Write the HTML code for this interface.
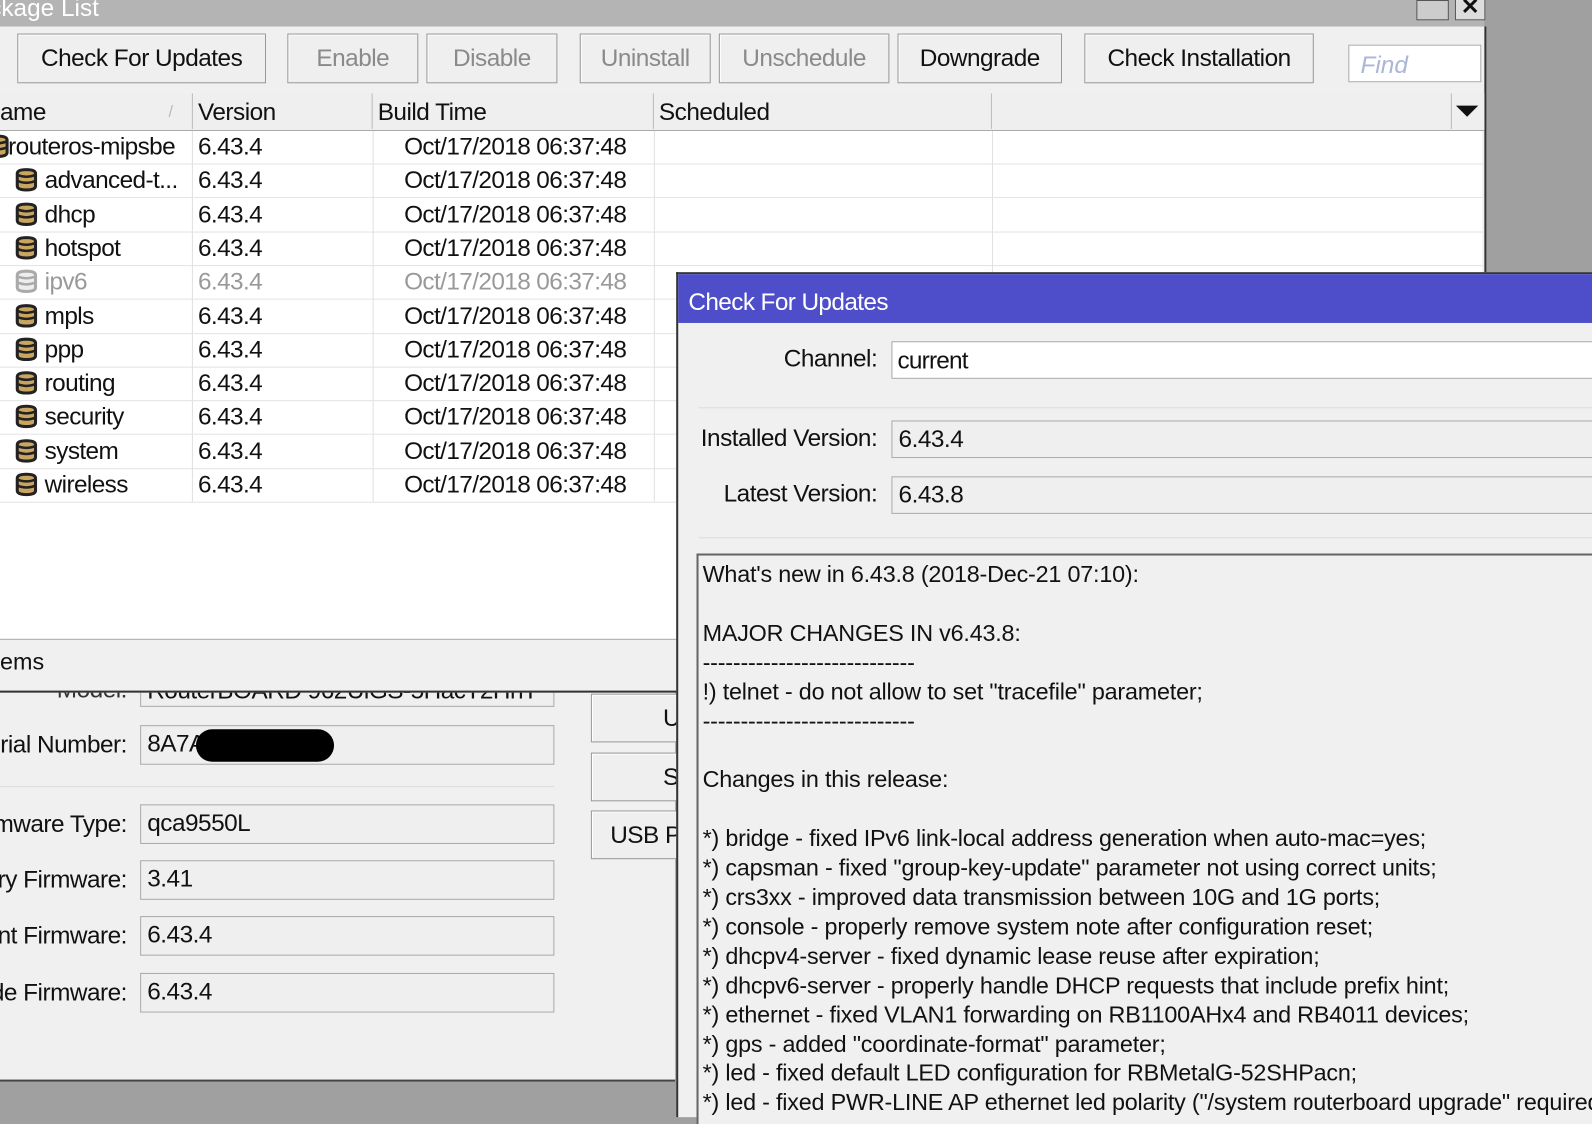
<!DOCTYPE html>
<html><head><meta charset="utf-8"><style>
html,body{margin:0;padding:0;width:1592px;height:1105px;overflow:hidden;background:#a0a0a0;}
#w{position:absolute;left:0;top:0;width:1568px;height:1088px;transform:scale(1.0153,1.0156);transform-origin:0 0;font-family:"Liberation Sans",sans-serif;color:#111;}
.a{position:absolute;}
.btn{position:absolute;top:33px;height:47px;border:1px solid #999;background:#efefef;box-shadow:inset 1px 1px 0 #fff;font-size:24px;line-height:47px;text-align:center;letter-spacing:-0.5px;white-space:nowrap;}
.dis{color:#8a8a8a;}
.hd{position:absolute;top:92px;height:35px;border-right:1px solid #bbb;font-size:24px;line-height:38px;padding-left:5px;box-sizing:border-box;letter-spacing:-0.5px;}
.row{position:absolute;left:0;width:1462px;height:33px;border-bottom:1px solid #e3e3e3;font-size:24px;line-height:34px;letter-spacing:-0.6px;}
.row span{position:absolute;top:0;white-space:nowrap;}
.fld{position:absolute;border:1px solid #aaa;background:#efefef;font-size:24px;line-height:36px;padding-left:6px;box-sizing:border-box;letter-spacing:-0.5px;white-space:nowrap;overflow:hidden;}
.lbl{position:absolute;font-size:24px;text-align:right;letter-spacing:-0.5px;white-space:nowrap;}
.ll{left:-200px;width:325px;}
.txt{font-size:23px;line-height:28.9px;letter-spacing:-0.2px;white-space:pre;}
</style></head><body><div id="w">
<div class="a" style="left:0;top:680px;width:665px;height:383px;background:#f0f0f0;border-bottom:2px solid #444"></div>
<div class="lbl ll" style="top:665px;line-height:30px;color:#333">Model:</div>
<div class="fld" style="left:138px;top:670px;width:408px;height:26px;line-height:20px">RouterBOARD 962UiGS-5HacT2HnT</div>
<div class="lbl ll" style="top:720px">Serial Number:</div>
<div class="fld" style="left:138px;top:714px;width:408px;height:39px">8A7A</div>
<div class="a" style="left:193px;top:718px;width:136px;height:32px;border-radius:16px;background:#000"></div>
<div class="a" style="left:0;top:774px;width:546px;height:1px;background:#ddd"></div>
<div class="lbl ll" style="top:798px">Firmware Type:</div>
<div class="fld" style="left:138px;top:792px;width:408px;height:39px">qca9550L</div>
<div class="lbl ll" style="top:853px">Factory Firmware:</div>
<div class="fld" style="left:138px;top:847px;width:408px;height:39px">3.41</div>
<div class="lbl ll" style="top:908px">Current Firmware:</div>
<div class="fld" style="left:138px;top:902px;width:408px;height:39px">6.43.4</div>
<div class="lbl ll" style="top:964px">Upgrade Firmware:</div>
<div class="fld" style="left:138px;top:958px;width:408px;height:39px">6.43.4</div>
<div class="btn" style="left:582px;top:683px;width:90px;height:48px;text-align:left;padding-left:70px;box-sizing:border-box">U</div>
<div class="btn" style="left:582px;top:741px;width:90px;height:48px;text-align:left;padding-left:70px;box-sizing:border-box">S</div>
<div class="btn" style="left:582px;top:798px;width:90px;height:48px;text-align:left;padding-left:18px;box-sizing:border-box">USB P</div>

<div class="a" style="left:-40px;top:0;width:1502px;height:26px;background:#b4b4b4;color:#fff;font-size:24px;line-height:18px">Package List</div>
<div class="a" style="left:1395px;top:0;width:30px;height:18px;border:1px solid #555;background:#ccc"></div>
<div class="a" style="left:1433px;top:-2px;width:28px;height:20px;border:1px solid #555;background:#ddd;font-size:22px;line-height:16px;text-align:center;font-weight:bold">✕</div>
<div class="a" style="left:0;top:26px;width:1462px;height:654px;background:#f0f0f0;border-right:2px solid #333;border-bottom:2px solid #333"></div>
<div class="btn" style="left:17px;width:243px">Check For Updates</div>
<div class="btn dis" style="left:283px;width:127px">Enable</div>
<div class="btn dis" style="left:420px;width:127px">Disable</div>
<div class="btn dis" style="left:571px;width:127px">Uninstall</div>
<div class="btn dis" style="left:708px;width:166px">Unschedule</div>
<div class="btn" style="left:884px;width:160px">Downgrade</div>
<div class="btn" style="left:1068px;width:224px">Check Installation</div>
<div class="a" style="left:1328px;top:44px;width:131px;height:37px;border:1px solid #aaa;background:#fff;color:#a9b6d6;font-style:italic;font-size:24px;line-height:40px;padding-left:11px;box-sizing:border-box">Find</div>
<div class="a" style="left:0;top:92px;width:1462px;height:36px;background:#efefef;border-bottom:1px solid #aaa"></div>
<div class="hd" style="left:0;width:190px;padding-left:0">ame<span style="position:absolute;left:166px;color:#bbb;font-size:16px">/</span></div>
<div class="hd" style="left:190px;width:177px">Version</div>
<div class="hd" style="left:367px;width:277px">Build Time</div>
<div class="hd" style="left:644px;width:333px">Scheduled</div>
<div class="hd" style="left:977px;width:453px"></div>
<div class="a" style="left:1434px;top:104px;width:0;height:0;border-left:11px solid transparent;border-right:11px solid transparent;border-top:11px solid #111"></div>
<div class="a" style="left:0;top:129px;width:1460px;height:500px;background:#fff"></div>
<div class="a" style="left:189px;top:129px;width:1px;height:365px;background:#e0e0e0"></div>
<div class="a" style="left:367px;top:129px;width:1px;height:365px;background:#e0e0e0"></div>
<div class="a" style="left:644px;top:129px;width:1px;height:365px;background:#e0e0e0"></div>
<div class="a" style="left:977px;top:129px;width:1px;height:140px;background:#e0e0e0"></div>
<div id="rows"></div>
<div class="a" style="left:0;top:629px;width:1460px;height:1px;background:#aaa"></div>
<div class="a" style="left:0;top:636px;font-size:23px;line-height:30px">ems</div>

<div class="a" style="left:666px;top:268px;width:910px;height:830px;background:#f0f0f0;border-left:2px solid #333;border-top:2px solid #333"></div>
<div class="a" style="left:668px;top:270px;width:910px;height:48px;background:#4e4ecb;color:#fff;font-size:24px;line-height:56px;padding-left:10px;box-sizing:border-box;letter-spacing:-0.6px">Check For Updates</div>
<div class="lbl" style="left:668px;top:340px;width:196px">Channel:</div>
<div class="a" style="left:878px;top:336px;width:700px;height:37px;border:1px solid #aaa;background:#fff;font-size:24px;line-height:38px;padding-left:5px;letter-spacing:-0.8px;box-sizing:border-box">current</div>
<div class="a" style="left:688px;top:401px;width:900px;height:1px;background:#ddd"></div>
<div class="lbl" style="left:668px;top:418px;width:196px">Installed Version:</div>
<div class="fld" style="left:878px;top:414px;width:700px;height:37px">6.43.4</div>
<div class="lbl" style="left:668px;top:473px;width:196px">Latest Version:</div>
<div class="fld" style="left:878px;top:469px;width:700px;height:37px">6.43.8</div>
<div class="a" style="left:688px;top:529px;width:900px;height:1px;background:#ddd"></div>
<div class="a" style="left:686px;top:545px;width:900px;height:560px;border-left:2px solid #666;border-top:2px solid #666;background:#f0f0f0;overflow:hidden">
<div class="txt" style="padding:4px 0 0 4px">What's new in 6.43.8 (2018-Dec-21 07:10):

MAJOR CHANGES IN v6.43.8:
----------------------------
!) telnet - do not allow to set "tracefile" parameter;
----------------------------

Changes in this release:

*) bridge - fixed IPv6 link-local address generation when auto-mac=yes;
*) capsman - fixed "group-key-update" parameter not using correct units;
*) crs3xx - improved data transmission between 10G and 1G ports;
*) console - properly remove system note after configuration reset;
*) dhcpv4-server - fixed dynamic lease reuse after expiration;
*) dhcpv6-server - properly handle DHCP requests that include prefix hint;
*) ethernet - fixed VLAN1 forwarding on RB1100AHx4 and RB4011 devices;
*) gps - added "coordinate-format" parameter;
*) led - fixed default LED configuration for RBMetalG-52SHPacn;
*) led - fixed PWR-LINE AP ethernet led polarity ("/system routerboard upgrade" required);</div></div>
</div>
<script>
var names=["routeros-mipsbe","advanced-t...","dhcp","hotspot","ipv6","mpls","ppp","routing","security","system","wireless"];
var h="";
var ic=function(g){var c=g?"#aaa":"#222",f=g?"#eee":"#c9a560";return '<svg width="24" height="24" viewBox="0 0 24 24" style="position:absolute;top:4px;left:0"><path d="M3 6 Q3 2 12 2 Q21 2 21 6 L21 18 Q21 22 12 22 Q3 22 3 18Z" fill="'+f+'" stroke="'+c+'" stroke-width="3"/><path d="M3 7 Q12 11 21 7 M3 13 Q12 17 21 13" fill="none" stroke="'+c+'" stroke-width="2.5"/></svg>';};
for(var i=0;i<11;i++){var g=i==4,t=128+i*33.3;var x=i==0?-14:14;
h+='<div class="row" style="top:'+t+'px;'+(g?'color:#999':'')+'"><span style="left:'+x+'px;width:40px;height:33px">'+ic(g)+'</span><span style="left:'+(i==0?8:44)+'px">'+names[i]+'</span><span style="left:195px">6.43.4</span><span style="left:398px">Oct/17/2018 06:37:48</span></div>';}
document.getElementById("rows").innerHTML=h;
</script>
</body></html>
